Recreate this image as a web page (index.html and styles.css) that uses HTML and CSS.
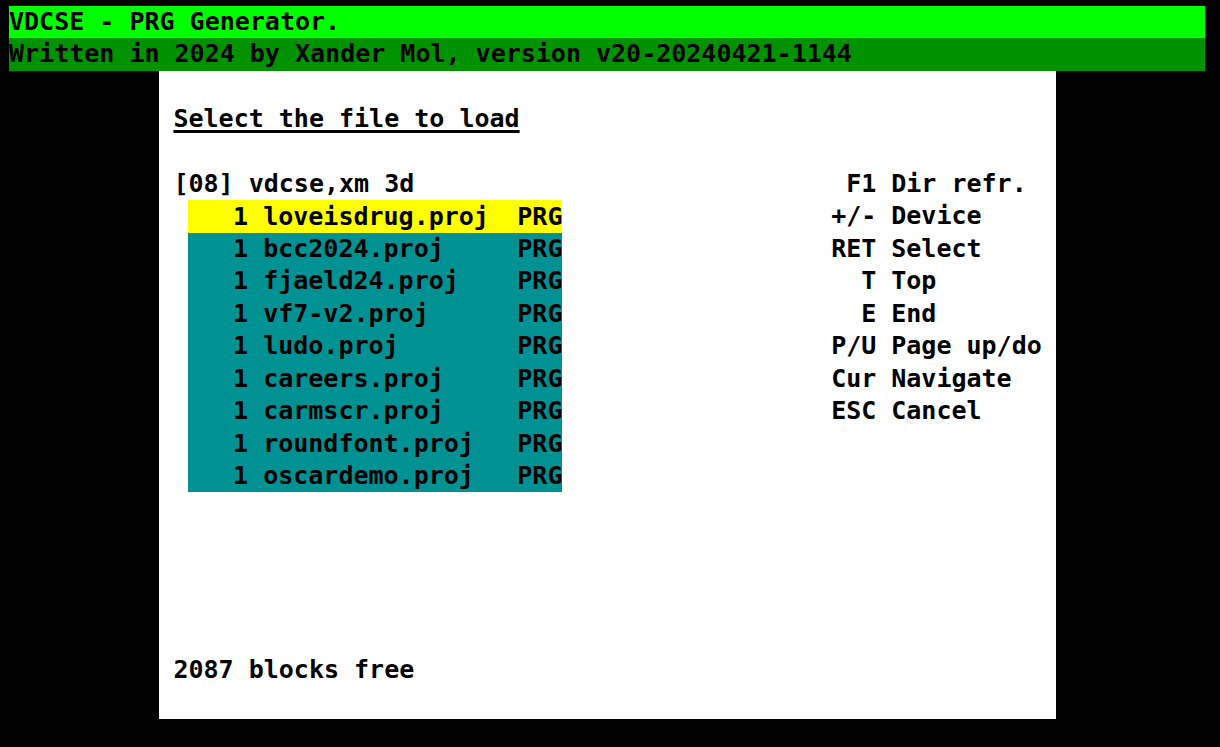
FILE: index.html
```html
<!DOCTYPE html>
<html lang="en">
<head>
<meta charset="utf-8">
<title>VDCSE - PRG Generator</title>
<link rel="stylesheet" href="styles.css">
</head>
<body>
<div class="screen">
  <header class="banner">
    <h1 class="title">VDCSE - PRG Generator.</h1>
    <p class="credits">Written in 2024 by Xander Mol, version v20-20240421-1144</p>
  </header>
  <main class="dialog">
    <h2 class="heading"><span class="underlined">Select the file to load</span></h2>
    <p class="device">[08] vdcse,xm 3d</p>
    <table class="files">
      <tbody>
        <tr class="selected"><td class="blocks">1</td><td>loveisdrug.proj</td><td class="type">PRG</td></tr>
        <tr><td class="blocks">1</td><td>bcc2024.proj</td><td class="type">PRG</td></tr>
        <tr><td class="blocks">1</td><td>fjaeld24.proj</td><td class="type">PRG</td></tr>
        <tr><td class="blocks">1</td><td>vf7-v2.proj</td><td class="type">PRG</td></tr>
        <tr><td class="blocks">1</td><td>ludo.proj</td><td class="type">PRG</td></tr>
        <tr><td class="blocks">1</td><td>careers.proj</td><td class="type">PRG</td></tr>
        <tr><td class="blocks">1</td><td>carmscr.proj</td><td class="type">PRG</td></tr>
        <tr><td class="blocks">1</td><td>roundfont.proj</td><td class="type">PRG</td></tr>
        <tr><td class="blocks">1</td><td>oscardemo.proj</td><td class="type">PRG</td></tr>
      </tbody>
    </table>
    <dl class="keys">
      <dt>F1</dt><dd>Dir refr.</dd>
      <dt>+/-</dt><dd>Device</dd>
      <dt>RET</dt><dd>Select</dd>
      <dt>T</dt><dd>Top</dd>
      <dt>E</dt><dd>End</dd>
      <dt>P/U</dt><dd>Page up/do</dd>
      <dt>Cur</dt><dd>Navigate</dd>
      <dt>ESC</dt><dd>Cancel</dd>
    </dl>
    <p class="free">2087 blocks free</p>
  </main>
</div>
</body>
</html>
```
FILE: styles.css
```css
* {
  box-sizing: border-box;
}

body {
  margin: 0;
  background: #000;
  color: #000;
  font: bold 25px/32px "DejaVu Sans Mono", monospace;
  white-space: nowrap;
}

h1, h2, p, dl, dd {
  margin: 0;
  font-size: inherit;
}

/* 80-column text screen, 22 rows in use */
.screen {
  display: grid;
  grid-template-columns: repeat(80, minmax(0, 1fr));
  grid-template-rows: repeat(22, minmax(32px, 1fr));
  min-height: 100vh;
  padding: 6px 15px 28px 9px;
}

.banner {
  grid-area: 1 / 1 / span 2 / span 80;
  display: grid;
  grid-template-rows: subgrid;
}

.title {
  background: #00ff00;
}

.credits {
  background: #009200;
}

.dialog {
  grid-area: 3 / 11 / span 20 / span 60;
  display: grid;
  grid-template-columns: subgrid;
  grid-template-rows: subgrid;
  background: #fff;
}

.heading {
  grid-area: 2 / 2 / span 1 / span 30;
}

.underlined {
  text-decoration: underline 3px;
  text-decoration-skip-ink: none;
  text-underline-offset: 3px;
}

.device {
  grid-area: 4 / 2 / span 1 / span 30;
}

.files {
  grid-area: 5 / 3 / span 9 / span 25;
  width: 100%;
  height: 100%;
  table-layout: fixed;
  border-collapse: collapse;
  background: #009292;
}

.files td {
  padding: 0;
}

.files .blocks {
  width: 20%;
  padding-right: 15px;
  text-align: right;
}

.files .type {
  width: 12%;
}

.selected {
  background: #ffff00;
}

.keys {
  grid-area: 4 / 46 / span 8 / span 14;
  display: grid;
  grid-template-columns: 45px 1fr;
  grid-template-rows: subgrid;
  column-gap: 15px;
}

.keys dt {
  text-align: right;
}

.free {
  grid-area: 19 / 2 / span 1 / span 30;
}
```
